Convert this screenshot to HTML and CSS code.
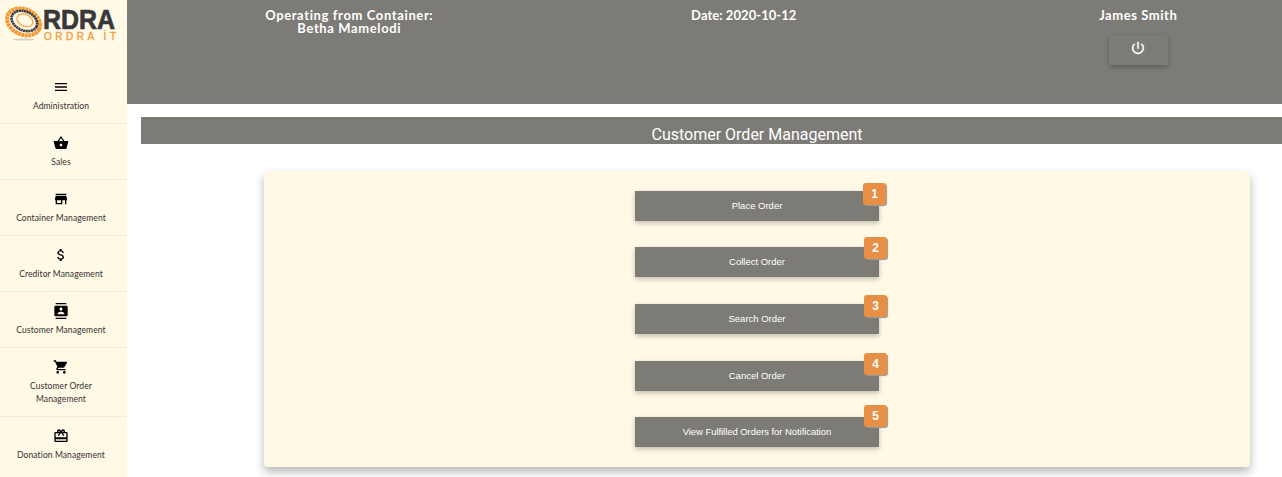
FILE: index.html
```html
<!DOCTYPE html>
<html lang="en">
<head>
<meta charset="utf-8">
<title>Customer Order Management</title>
<link rel="stylesheet" href="styles.css">
</head>
<body>
<div class="app">
  <aside class="sidebar">
    <svg class="logo" viewBox="0 0 127 68">
      <ellipse class="logo-shade" cx="24" cy="39.5" rx="11" ry="1"/>
      <g fill="none" transform="rotate(24 24 21)">
        <ellipse class="ring-outer" cx="24" cy="22" rx="17.2" ry="12.6"/>
        <ellipse class="ring-dark" cx="24.3" cy="20.8" rx="13.4" ry="9.4"/>
        <ellipse class="ring-inner" cx="24.5" cy="20" rx="8.3" ry="5.8"/>
      </g>
      <text class="logo-name" x="43" y="28.8" textLength="72" lengthAdjust="spacingAndGlyphs">RDRA</text>
      <text class="logo-sub" x="44" y="39.5" textLength="72">ORDRA İT</text>
    </svg>
    <nav class="menu">
      <a class="item"><svg class="icon" viewBox="0 0 24 24"><path d="M3 18h18v-2H3v2zm0-5h18v-2H3v2zm0-7v2h18V6H3z"/></svg><span>Administration</span></a>
      <a class="item"><svg class="icon" viewBox="0 0 24 24"><path d="M17.21 9l-4.38-6.56c-.19-.28-.51-.42-.83-.42-.32 0-.64.14-.83.43L6.79 9H2c-.55 0-1 .45-1 1 0 .09.01.18.04.27l2.54 9.27c.23.84 1 1.46 1.92 1.46h13c.92 0 1.69-.62 1.93-1.46l2.54-9.27L23 10c0-.55-.45-1-1-1h-4.79zM9 9l3-4.4L15 9H9zm3 8c-1.1 0-2-.9-2-2s.9-2 2-2 2 .9 2 2-.9 2-2 2z"/></svg><span>Sales</span></a>
      <a class="item"><svg class="icon" viewBox="0 0 24 24"><path d="M20 4H4v2h16V4zm1 10v-2l-1-5H4l-1 5v2h1v6h10v-6h4v6h2v-6h1zm-9 4H6v-4h6v4z"/></svg><span>Container Management</span></a>
      <a class="item"><svg class="icon" viewBox="0 0 24 24"><path d="M11.8 10.9c-2.27-.59-3-1.2-3-2.15 0-1.09 1.01-1.85 2.7-1.85 1.78 0 2.44.85 2.5 2.1h2.21c-.07-1.72-1.12-3.3-3.21-3.81V3h-3v2.16c-1.94.42-3.5 1.68-3.5 3.61 0 2.31 1.91 3.46 4.7 4.13 2.5.6 3 1.48 3 2.41 0 .69-.49 1.79-2.7 1.79-2.06 0-2.87-.92-2.98-2.1h-2.2c.12 2.19 1.76 3.42 3.68 3.83V21h3v-2.15c1.95-.37 3.5-1.5 3.5-3.55 0-2.84-2.43-3.81-4.7-4.4z"/></svg><span>Creditor Management</span></a>
      <a class="item"><svg class="icon" viewBox="0 0 24 24"><path d="M20 0H4v2h16V0zM4 24h16v-2H4v2zM20 4H4c-1.1 0-2 .9-2 2v12c0 1.1.9 2 2 2h16c1.1 0 2-.9 2-2V6c0-1.1-.9-2-2-2zm-8 2.75c1.24 0 2.25 1.01 2.25 2.25s-1.01 2.25-2.25 2.25S9.75 10.24 9.75 9 10.76 6.75 12 6.75zM17 17H7v-1.5c0-1.67 3.33-2.5 5-2.5s5 .83 5 2.5V17z"/></svg><span>Customer Management</span></a>
      <a class="item"><svg class="icon" viewBox="0 0 24 24"><path d="M7 18c-1.1 0-1.99.9-1.99 2S5.9 22 7 22s2-.9 2-2-.9-2-2-2zM1 2v2h2l3.6 7.59-1.35 2.45c-.16.28-.25.61-.25.96 0 1.1.9 2 2 2h12v-2H7.42c-.14 0-.25-.11-.25-.25l.03-.12.9-1.63h7.45c.75 0 1.41-.41 1.75-1.03l3.58-6.49c.08-.14.12-.31.12-.48 0-.55-.45-1-1-1H5.21l-.94-2H1zm16 16c-1.1 0-1.99.9-1.99 2s.89 2 1.99 2 2-.9 2-2-.9-2-2-2z"/></svg><span>Customer Order<br>Management</span></a>
      <a class="item"><svg class="icon" viewBox="0 0 24 24"><path d="M20 6h-2.18c.11-.31.18-.65.18-1 0-1.66-1.34-3-3-3-1.05 0-1.96.54-2.5 1.35l-.5.67-.5-.68C10.96 2.54 10.05 2 9 2 7.34 2 6 3.34 6 5c0 .35.07.69.18 1H4c-1.11 0-1.99.89-1.99 2L2 19c0 1.11.89 2 2 2h16c1.11 0 2-.89 2-2V8c0-1.11-.89-2-2-2zm-5-2c.55 0 1 .45 1 1s-.45 1-1 1-1-.45-1-1 .45-1 1-1zM9 4c.55 0 1 .45 1 1s-.45 1-1 1-1-.45-1-1 .45-1 1-1zm11 15H4v-2h16v2zm0-5H4V8h5.08L7 10.83 8.62 12 11 8.76l1-1.36 1 1.36L15.38 12 17 10.83 14.92 8H20v6z"/></svg><span>Donation Management</span></a>
    </nav>
  </aside>
  <main class="main">
    <header class="topbar">
      <div class="col container-name">Operating from Container:<br>Betha Mamelodi</div>
      <div class="col date">Date: 2020-10-12</div>
      <div class="col user">James Smith
        <button class="power"><svg class="icon" viewBox="0 0 24 24"><path d="M13 3h-2v10h2V3zm4.83 2.17l-1.42 1.42C17.99 7.86 19 9.81 19 12c0 3.87-3.13 7-7 7s-7-3.13-7-7c0-2.19 1.01-4.14 2.58-5.42L6.17 5.17C4.23 6.82 3 9.26 3 12c0 4.97 4.03 9 9 9s9-4.03 9-9c0-2.74-1.23-5.18-3.17-6.83z"/></svg></button>
      </div>
    </header>
    <h1 class="title">Customer Order Management</h1>
    <section class="card">
      <button class="action">Place Order<b class="badge first">1</b></button>
      <button class="action">Collect Order<b class="badge second">2</b></button>
      <button class="action">Search Order<b class="badge third">3</b></button>
      <button class="action">Cancel Order<b class="badge fourth">4</b></button>
      <button class="action wide-label">View Fulfilled Orders for Notification<b class="badge fifth">5</b></button>
    </section>
  </main>
</div>
</body>
</html>
```
FILE: styles.css
```css
* { box-sizing: border-box; }
body { margin: 0; background: #fff; overflow: hidden; }
.app { display: flex; height: 477px; overflow: hidden; }
.sidebar { width: 127px; flex: none; background: #fff9e6; }
.logo { display: block; width: 127px; height: 68px; }
.logo-shade { fill: #d5d0c3; }
.ring-outer { stroke: #f39a35; stroke-width: 4; stroke-dasharray: 3 .5; }
.ring-dark { stroke: #3b3b3d; stroke-width: 2.6; stroke-dasharray: 2.2 .4; }
.ring-inner { stroke: #f39a35; stroke-width: 1.3; stroke-dasharray: 1.6 .3; }
.logo-name { font: bold 27px "Liberation Sans", sans-serif; fill: #38383a; stroke: #38383a; stroke-width: .7; }
.logo-sub { font: 10px "Liberation Sans", sans-serif; fill: #f39a35; stroke: #f39a35; stroke-width: .3; }
.menu { display: flex; flex-direction: column; }
.item { display: flex; flex-direction: column; align-items: center; gap: 5px; padding: 11px 5px 10px 0; border-bottom: 1px solid #f3ecdb; font: 8.5px/13px Lato, sans-serif; color: #33322f; text-align: center; letter-spacing: .1px; }
.item:last-child { border-bottom: 0; }
.icon { display: block; width: 16px; height: 16px; fill: #000; }
.main { flex: 1; min-width: 0; overflow: hidden; }
.topbar { display: grid; grid-template-columns: repeat(3, 394.5px); height: 104px; padding: 9px 0 0 25px; background: #7d7b76; color: #fff; font: bold 13px/13px Lato, sans-serif; text-align: center; overflow: hidden; }
.container-name { letter-spacing: .62px; }
.date { letter-spacing: .05px; }
.user { letter-spacing: .55px; }
.power { display: flex; align-items: center; justify-content: center; width: 59px; height: 30px; margin: 13px auto 0; padding: 0 0 4px; border: 0; background: #7d7b76; box-shadow: 0 2px 5px rgba(0,0,0,.25); }
.power .icon { fill: #fff; stroke: #fff; stroke-width: .5; }
.title { margin: 13px 0 0 14px; height: 27px; padding-left: 91px; background: #7d7b76; color: #fff; font: 16px/35px Roboto, sans-serif; overflow: hidden; text-align: center; }
.card { display: flex; flex-direction: column; align-items: center; gap: 27px; width: 986px; height: 296px; margin: 27px 0 0 137px; padding-top: 20px; background: #fff9e6; border-radius: 4px; box-shadow: 0 5px 10px rgba(0,0,0,.28); }
.action { position: relative; flex: none; width: 244px; height: 30px; padding: 0; border: 0; background: #7d7b76; color: #fff; font: 9.5px/30px "Liberation Sans", Arial, sans-serif; box-shadow: 0 2px 5px rgba(0,0,0,.25); }
.action:first-child { margin-bottom: -1px; }
.action:last-child { margin-top: -1px; }
.wide-label { letter-spacing: -.06px; }
.badge { position: absolute; right: -8px; width: 23px; height: 22px; border-radius: 3px; background: #e88f46; box-shadow: 1px 1px 1px #999; font: bold 12px/22px "Liberation Sans", Arial, sans-serif; }
.first { top: -8px; right: -7px; }
.second { top: -10px; }
.third { top: -9px; }
.fourth { top: -8px; }
.fifth { top: -12px; }
```
